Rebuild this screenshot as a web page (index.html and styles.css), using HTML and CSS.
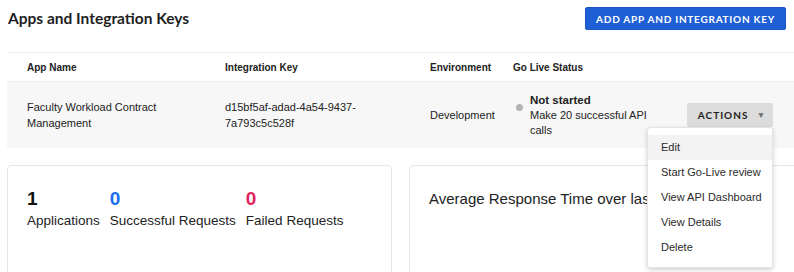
FILE: index.html
```html
<!DOCTYPE html>
<html lang="en">
<head>
<meta charset="utf-8">
<title>Apps and Integration Keys</title>
<link rel="stylesheet" href="styles.css">
</head>
<body>
<div class="page">
  <header class="top">
    <h1 class="title">Apps and Integration Keys</h1>
    <button class="btn-primary">ADD APP AND INTEGRATION KEY</button>
  </header>

  <div class="table">
    <div class="row head">
      <div class="c-name">App Name</div>
      <div class="c-key">Integration Key</div>
      <div class="c-env">Environment</div>
      <div class="c-status">Go Live Status</div>
      <div class="c-act"></div>
    </div>
    <div class="row body">
      <div class="c-name two">Faculty Workload Contract<br>Management</div>
      <div class="c-key two">d15bf5af-adad-4a54-9437-<br>7a793c5c528f</div>
      <div class="c-env">Development</div>
      <div class="c-status status">
        <span class="dot"></span>
        <div class="status-text"><strong>Not started</strong><br>Make 20 successful API<br>calls</div>
      </div>
      <div class="c-act">
        <div class="actions">
          <button class="btn-actions">ACTIONS <span class="caret">&#9660;</span></button>
          <ul class="menu">
            <li class="active">Edit</li>
            <li>Start Go-Live review</li>
            <li>View API Dashboard</li>
            <li>View Details</li>
            <li>Delete</li>
          </ul>
        </div>
      </div>
    </div>
  </div>

  <div class="cards">
    <section class="card stats">
      <div class="stat">
        <div class="num">1</div>
        <div class="lbl">Applications</div>
      </div>
      <div class="stat">
        <div class="num blue">0</div>
        <div class="lbl">Successful Requests</div>
      </div>
      <div class="stat">
        <div class="num red">0</div>
        <div class="lbl">Failed Requests</div>
      </div>
    </section>
    <section class="card chart">
      <h2 class="chart-title">Average Response Time over last 30 days</h2>
    </section>
  </div>
</div>
</body>
</html>
```

FILE: styles.css
```css
* { box-sizing: border-box; }
html, body { margin: 0; padding: 0; background: #fff; }
body {
  font-family: "Liberation Sans", Arial, sans-serif;
  color: #1e1e1e;
  overflow: hidden;
  width: 794px;
  height: 272px;
}
.page {
  padding-left: 7px;
  width: 810px;
}
.top {
  display: flex;
  justify-content: space-between;
  align-items: flex-start;
  height: 52px;
  padding-right: 24px;
}
.title {
  margin: 7px 0 0 1px;
  font-family: Lato, sans-serif;
  font-weight: 700;
  font-size: 15.5px;
  line-height: 22px;
  color: #1e1e1e;
}
.btn-primary {
  margin-top: 7px;
  width: 201px;
  height: 23px;
  background: #1f5fd6;
  border: 1px solid #1c55c2;
  border-radius: 2px;
  color: #fff;
  font-family: Lato, sans-serif;
  font-weight: 700;
  font-size: 10px;
  letter-spacing: 0.75px;
  padding: 0;
}
.table {
  border-top: 1px solid #ececec;
  width: 803px;
}
.row {
  display: grid;
  grid-template-columns: 198px 205px 83px 174px 1fr;
  padding-left: 20px;
  align-items: center;
  font-size: 11px;
}
.row.head {
  height: 29px;
  font-weight: 700;
  font-size: 10px;
  color: #222;
  border-bottom: 1px solid #ececec;
}
.row.body {
  height: 66px;
  background: #f7f7f7;
  color: #222;
}
.two { line-height: 16px; }
.status {
  display: flex;
  align-items: flex-start;
}
.dot {
  width: 7px;
  height: 7px;
  border-radius: 50%;
  background: #b4b4b4;
  margin: 11px 0 0 3px;
  flex: none;
}
.status-text {
  margin-left: 7px;
  line-height: 15px;
}
.status-text strong { font-size: 11.5px; }
.actions { position: relative; width: 86px; }
.btn-actions {
  display: block;
  width: 86px;
  height: 24px;
  background: #dcdcdc;
  border: none;
  border-radius: 2px;
  font-family: Lato, sans-serif;
  font-weight: 700;
  font-size: 10px;
  letter-spacing: 1px;
  color: #222;
  padding: 0 0 0 4px;
  margin-top: 0;
}
.caret {
  font-size: 8.5px;
  color: #6e6e6e;
  margin-left: 5px;
  vertical-align: 1px;
}
.menu {
  position: absolute;
  top: 24px;
  right: 0;
  width: 126px;
  margin: 0;
  padding: 7px 0;
  list-style: none;
  background: #fff;
  border: 1px solid #e4e4e4;
  border-radius: 3px;
  box-shadow: 0 2px 5px rgba(0,0,0,0.18);
  z-index: 5;
}
.menu li {
  height: 25px;
  line-height: 24px;
  padding-left: 13px;
  font-size: 11px;
  color: #2a2a2a;
}
.menu li.active { background: #f3f3f3; }
.cards {
  display: grid;
  grid-template-columns: 385px 420px;
  gap: 17px;
  margin-top: 17px;
}
.card {
  height: 140px;
  border: 1px solid #e6e6e6;
  border-radius: 4px;
  background: #fff;
}
.stats {
  display: flex;
  gap: 10px;
  padding: 21px 0 0 19px;
}
.num {
  font-size: 19px;
  font-weight: 700;
  line-height: 24px;
  color: #111;
}
.num.blue { color: #1a6df2; }
.num.red { color: #e0245e; }
.lbl {
  font-size: 13.5px;
  line-height: 20px;
  color: #222;
}
.chart { padding: 23px 0 0 19px; }
.chart-title {
  margin: 0;
  font-weight: 400;
  font-size: 15px;
  line-height: 20px;
  color: #222;
  white-space: nowrap;
}
```
